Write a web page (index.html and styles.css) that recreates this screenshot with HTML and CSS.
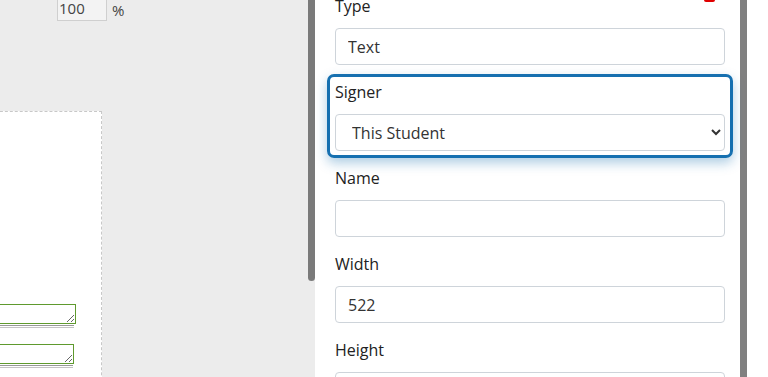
FILE: index.html
```html
<!DOCTYPE html>
<html lang="en">
<head>
    <meta charset="UTF-8">
    <title>Field Editor</title>
    <link rel="stylesheet" href="styles.css">
</head>
<body>
    <div class="editor">
        <div class="canvas">
            <div class="zoom-row">
                <input type="text" class="zoom-input" value="100">
                <span class="zoom-unit">%</span>
            </div>
            <div class="page">
                <div class="field-box">
                    <textarea class="pdf-field wide"></textarea>
                    <div class="field-line wide"></div>
                </div>
                <div class="field-box">
                    <textarea class="pdf-field"></textarea>
                    <div class="field-line"></div>
                </div>
            </div>
        </div>
        <div class="scroll-track"><div class="scroll-thumb"></div></div>

        <div class="panel">
            <span class="delete-btn"></span>
            <div class="group">
                <label>Type</label>
                <input type="text" class="form-control" value="Text">
            </div>
            <div class="group active">
                <label>Signer</label>
                <select class="form-control">
                    <option>This Student</option>
                    <option>Teacher</option>
                    <option>Parent</option>
                </select>
            </div>
            <div class="group">
                <label>Name</label>
                <input type="text" class="form-control" value="">
            </div>
            <div class="group">
                <label>Width</label>
                <input type="text" class="form-control" value="522">
            </div>
            <div class="group">
                <label>Height</label>
                <input type="text" class="form-control" value="">
            </div>
        </div>
        <div class="panel-bar"></div>
        <div class="gutter"></div>
    </div>
</body>
</html>
```

FILE: styles.css
```css
body {
    margin: 0;
    padding: 0;
    font-family: 'Open Sans', 'Liberation Sans', sans-serif;
    background: #fff;
    overflow: hidden;
}
.editor {
    display: flex;
    height: 377px;
    overflow: hidden;
}
.canvas {
    width: 308px;
    flex-shrink: 0;
    background: #ececec;
    overflow: hidden;
}
.zoom-row {
    display: flex;
    align-items: center;
    gap: 5px;
    margin-top: -6px;
    padding-left: 57px;
}
.zoom-input {
    width: 50px;
    height: 27px;
    box-sizing: border-box;
    border: 1px solid #cfcfcf;
    background: #f3f3f3;
    color: #444;
    font-family: inherit;
    font-size: 15px;
    padding: 0 0 0 1px;
}
.zoom-unit {
    color: #444;
    font-size: 15px;
    margin-top: 4px;
}
.page {
    margin: 90px 0 0 -10px;
    width: 112px;
    height: 400px;
    background: #fff;
    border: 1px dashed #c8c8c8;
    box-sizing: border-box;
    padding-top: 192px;
    display: flex;
    flex-direction: column;
    gap: 16px;
}
.field-box {
    width: 83px;
}
.field-box .wide {
    width: 85px;
}
.pdf-field {
    display: block;
    width: 83px;
    height: 20px;
    box-sizing: border-box;
    border: 1px solid #5f9a2e;
    background: #fff;
    padding: 0;
    resize: both;
    overflow: hidden;
}
.field-line {
    width: 82px;
    height: 1px;
    margin-top: 1px;
    border-top: 1px solid #999;
    border-bottom: 1px solid #c4c4c4;
}
.field-line.wide {
    width: 83px;
}
.scroll-track {
    width: 7px;
    flex-shrink: 0;
    background: #ececec;
}
.scroll-thumb {
    height: 281px;
    background: #7a7a7a;
    border-radius: 0 0 4px 4px;
}
.panel {
    position: relative;
    width: 425px;
    flex-shrink: 0;
    box-sizing: border-box;
    padding: 0 15px 0 20px;
    margin-top: -6px;
    background: #fff;
}
.delete-btn {
    position: absolute;
    top: -1px;
    right: 25px;
    width: 11px;
    height: 9px;
    border-radius: 2px;
    background: #e00000;
}
.group {
    margin-bottom: 15px;
}
.group label {
    display: block;
    font-size: 16px;
    line-height: 24px;
    color: #222;
    margin-bottom: 10px;
}
.group.active {
    margin: -6px -8px 8px;
    padding: 3px 5px 4px;
    border: 3px solid #1670b0;
    border-radius: 7px;
    box-shadow: 0 5px 12px rgba(22, 112, 176, 0.35);
}
.form-control {
    display: block;
    width: 100%;
    height: 37px;
    box-sizing: border-box;
    border: 1px solid #ced4da;
    border-radius: 4px;
    background: #fff;
    color: #333;
    font-family: inherit;
    font-size: 16px;
    padding: 0 12px;
}
select.form-control {
    padding-left: 12px;
}
.panel-bar {
    width: 7px;
    flex-shrink: 0;
    background: #808080;
}
.gutter {
    flex: 1;
    background: #fff;
}
```
